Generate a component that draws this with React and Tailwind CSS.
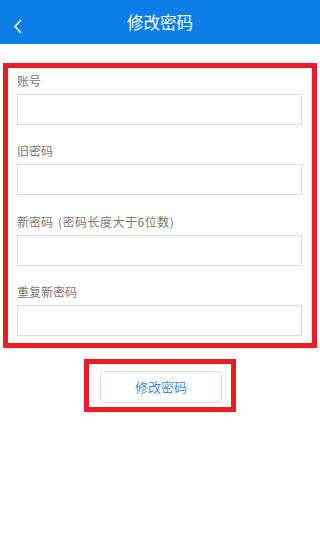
export default function App() {
  const font = { fontFamily: '"Noto Sans CJK SC", "Noto Sans", sans-serif' };
  const fields = [
    { key: "a", node: "账号" },
    { key: "b", node: "旧密码" },
    {
      key: "c",
      node: (
        <>
          新密码<span className="ml-[5px] tracking-[0.5px]">(密码长度大于6位数)</span>
        </>
      ),
    },
    { key: "d", node: "重复新密码" },
  ];
  return (
    <div className="w-[320px] h-[550px] bg-white flex flex-col" style={font}>
      <div className="h-[44px] bg-[#0b7ee8] relative flex items-center justify-center">
        <svg className="absolute left-[13px] top-[18.5px]" width="10" height="15" viewBox="0 0 10 15">
          <path d="M7.5 1.5 L2 7.5 L7.5 13.5" fill="none" stroke="#ffffff" strokeWidth="1.6" strokeLinecap="round" strokeLinejoin="round" />
        </svg>
        <span className="text-white text-[16.5px] leading-none">修改密码</span>
      </div>
      <div className="mt-[19px] mx-[3px] border-[5px] border-[#ed1c24] pl-[9px] pr-[10px] pt-[3.5px] pb-[7px] flex flex-col gap-[17.5px]">
        {fields.map((f) => (
          <div key={f.key} className="flex flex-col">
            <div className="h-[17px] leading-[17px] text-[12px] text-[#777777] whitespace-nowrap">{f.node}</div>
            <div className="mt-[5px] h-[31px] border border-[#dcdcdc] bg-white"></div>
          </div>
        ))}
      </div>
      <div className="mt-[11px] self-center border-[5px] border-[#ed1c24] pl-[11px] pr-[9px] pt-[7px] pb-[4px]">
        <div className="w-[122px] h-[32px] rounded-[4px] border border-[#c6e2ff] flex items-center justify-center text-[13px] text-[#3a8ee6]">
          修改密码
        </div>
      </div>
    </div>
  );
}
